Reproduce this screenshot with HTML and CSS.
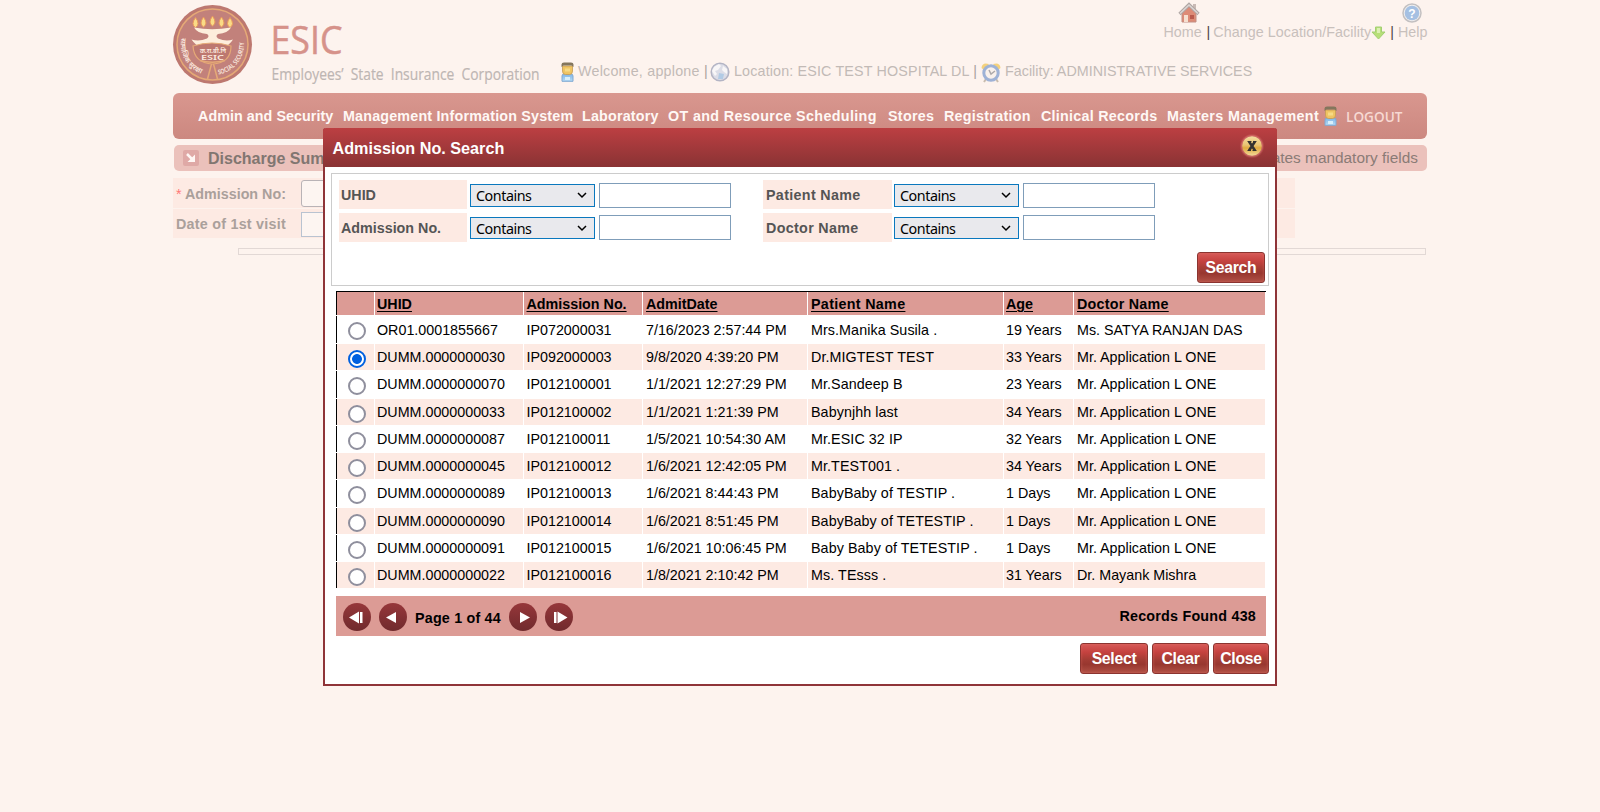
FILE: index.html
```html
<!DOCTYPE html>
<html lang="en">
<head>
<meta charset="utf-8">
<title>ESIC - Discharge Summary</title>
<link rel="stylesheet" href="styles.css">
</head>
<body>
<svg class="defs" width="0" height="0">
  <defs>
    <linearGradient id="disc" x1="0" y1="0" x2="0" y2="1"><stop offset="0" stop-color="#96373a"/><stop offset="1" stop-color="#702a2d"/></linearGradient>
    <linearGradient id="gold" x1="0" y1="0" x2="0" y2="1"><stop offset="0" stop-color="#f2dda0"/><stop offset=".45" stop-color="#e9c473"/><stop offset=".6" stop-color="#dfa93f"/><stop offset="1" stop-color="#f3d999"/></linearGradient>
    <linearGradient id="shirt" x1="0" y1="0" x2="0" y2="1"><stop offset="0" stop-color="#7fb4e6"/><stop offset="1" stop-color="#b5dcf6"/></linearGradient>
    <symbol id="user" viewBox="0 0 13 20">
      <path d="M1 14Q1 12 3 12H10Q12 12 12 14V19.300H1Z" fill="url(#shirt)" stroke="#80a9d2"/>
      <path d="M4 15h5v3H4z" fill="#d8effb"/>
      <path d="M1.500 4h10v5q0 3.500-3 3.500H4.500q-3 0-3-3.500z" fill="#efc463" stroke="#c69a52" stroke-width=".8"/>
      <path d="M4 6.500h5v3H4z" fill="#f7da85"/>
      <path d="M.500 5V2.500Q.500 .500 3 .500H10Q12.500 .500 12.500 2.500V5L10.500 3.500H2.500Z" fill="#84765d"/>
    </symbol>
  </defs>
</svg>

<div class="page">
  <header class="header">
    <svg class="logo" width="380" height="93" viewBox="0 0 380 93">
      <circle cx="39.500" cy="44.500" r="39.500" fill="#bd7870"/>
      <circle cx="39.500" cy="44.500" r="35.500" fill="#c2817b" stroke="#e5a977" stroke-width="1.500"/>
      <g fill="#fadb86" stroke="#e99a5c" stroke-width="1">
        <path d="M22.500 17.500q-5 7 0 10q5-3 0-10zM30.500 17q-5 7 0 10q5-3 0-10zM39.500 16q-5 7 0 10q5-3 0-10zM48.500 17q-5 7 0 10q5-3 0-10zM57 17.500q-5 7 0 10q5-3 0-10z"/>
      </g>
      <path d="M21 27.500Q39 31 58 27.500Q55 33 45 34Q42 36 45 38.500Q53 42 60 39.500Q56 46 50 47Q39 42 28 47Q23 46 18.500 39.500Q26 42 34 38.500Q37 36 34 34Q24 33 21 27.500Z" fill="#fdeedc"/>
      <path d="M20 46Q39 40 58 46Q58 63 39.500 64Q21 63 20 46Z" fill="#bd7870" stroke="#e5a977" stroke-width="1.200"/>
      <path d="M27 60.500Q39 64 52 60.500M38.500 64L34.500 79M40.500 64L44.500 79" fill="none" stroke="#e5a977" stroke-width="1.500"/>
      <text class="seal" x="27" y="52.500" font-size="6.500" textLength="26" lengthAdjust="spacingAndGlyphs">क.रा.बी.नि</text>
      <text class="seal" x="28" y="59.500" font-size="7" textLength="23" lengthAdjust="spacingAndGlyphs">ESIC</text>
      <path id="arcL" d="M8.500 38A31 31 0 0 0 34 75" fill="none"/>
      <path id="arcR" d="M45.500 74.500A30.500 30.500 0 0 0 70.500 39" fill="none"/>
      <text class="seal" font-size="7"><textPath href="#arcL" textLength="44">सामाजिक सुरक्षा</textPath></text>
      <text class="seal" font-size="6.500"><textPath href="#arcR" textLength="45" lengthAdjust="spacingAndGlyphs">SOCIAL SECURITY</textPath></text>
      <text class="brand" x="97.500" y="53.500" textLength="72" lengthAdjust="spacingAndGlyphs">ESIC</text>
      <text class="tagline" x="98.500" y="80" textLength="268" lengthAdjust="spacingAndGlyphs">Employees’ State Insurance Corporation</text>
    </svg>
    <div class="welcome">
      <svg width="13" height="20"><use href="#user"/></svg>
      <span class="w1">Welcome, applone <i>|</i></span>
      <svg class="globe" width="20" height="20" viewBox="0 0 20 20"><circle cx="10" cy="10" r="8.800" fill="#dcdde7" stroke="#b3b4c4" stroke-width="1.500"/><path d="M4 5L9 2L11 4L8 8L5 9L7 12L5 14L2 9ZM13 4L17 7L17 12L14 10L12 8Z" fill="#f8f6f7"/><path d="M9 11L14 12L13 17L8 17Z" fill="#b2cbe5"/></svg>
      <span class="w2">Location: ESIC TEST HOSPITAL DL <i>|</i></span>
      <svg width="20" height="21" viewBox="0 0 20 21"><path d="M.500 6Q1 0 8 2L3 8ZM19.500 6Q19 0 12 2L17 8Z" fill="#f4d17d"/><path d="M5 17L3 20M15 17L17 20" stroke="#c9bcae" stroke-width="2"/><circle cx="10" cy="11" r="7.200" fill="#f9f1ec" stroke="#9eb2d6" stroke-width="3"/><path d="M8 8L10 12L14 9" fill="none" stroke="#ada9aa" stroke-width="1.500"/></svg>
      <span class="w3">Facility: ADMINISTRATIVE SERVICES</span>
    </div>
    <div class="links">
      <span class="link home">
        <svg width="22" height="21" viewBox="0 0 22 21"><path d="M4 11L11 5L18 11V20H4Z" fill="#dd8b77" stroke="#c28f85"/><path d="M15 2h3v6h-3z" fill="#c9bab5"/><path d="M1.500 12L11 2.500L20.500 12" fill="none" stroke="#afa6a4" stroke-width="3.200"/><path d="M2 11.500L11 3L20 11.500" fill="none" stroke="#ddd6d4" stroke-width="1.500"/><path d="M6 13h4v7H6z" fill="#f6dfd0"/><path d="M12 13h4v4h-4z" fill="#ba5b4e"/></svg>
        <span>Home</span></span>
      <b>|</b>
      <span class="link change">Change Location/Facility</span>
      <svg class="down" width="15" height="14" viewBox="0 0 15 14"><path d="M4.500 1H10.500V6H14L7.500 13L1 6H4.500Z" fill="#b7df79" stroke="#a2cf73"/><path d="M6 2H9V7H6Z" fill="#dcf0b4"/></svg>
      <b>|</b>
      <span class="link help">
        <svg width="20" height="20" viewBox="0 0 20 20"><circle cx="10" cy="10" r="9" fill="#f1efef" stroke="#c3c0c1" stroke-width="1.500"/><circle cx="10" cy="10" r="7.300" fill="#a5c0e2"/><text class="qmark" x="10" y="14.500" text-anchor="middle">?</text></svg>
        <span>Help</span></span>
    </div>
  </header>

  <nav class="nav">
    <a class="n1">Admin and Security</a><a class="n2">Management Information System</a><a class="n3">Laboratory</a><a class="n4">OT and Resource Scheduling</a><a class="n5">Stores</a><a class="n6">Registration</a><a class="n7">Clinical Records</a><a class="n8">Masters Management</a>
    <svg width="13" height="20"><use href="#user"/></svg>
    <a class="logout">LOGOUT</a>
  </nav>

  <div class="titlebar">
    <svg width="16" height="16" viewBox="0 0 16 16"><rect width="16" height="16" rx="2" fill="#dfa9a6"/><path d="M4 4L9 9" stroke="#fff6f3" stroke-width="2.500"/><path d="M12 4.500V12H4.500Z" fill="#fff6f3"/></svg>
    <h1>Discharge Summary</h1>
    <span class="note">* indicates mandatory fields</span>
  </div>

  <div class="form">
    <div class="row"><label><em>*</em> Admission No:</label><span class="field plain"></span></div>
    <div class="row"><label class="visit">Date of 1st visit</label><span class="field"></span></div>
  </div>
  <div class="strip"></div>
</div>

<section class="modal">
  <div class="modal-head">
    <h2>Admission No. Search</h2>
    <svg width="26" height="26" viewBox="0 0 26 26"><circle cx="13" cy="13" r="12" fill="#d56762" opacity=".3"/><circle cx="13" cy="13" r="11" fill="#e08278" opacity=".5"/><circle cx="13" cy="13" r="9.800" fill="url(#gold)"/><path d="M10 8.500L16 17.500M16 8.500L10 17.500" stroke="#33312f" stroke-width="2.600"/><path d="M8.500 8.500h4M14 8.500h3.500M8.500 17.500h3.500M13.500 17.500h4" stroke="#33312f" stroke-width="1.200"/></svg>
  </div>
  <div class="criteria">
    <div class="fields">
      <label>UHID</label><span class="sel">Contains<svg width="10" height="7" viewBox="0 0 10 7"><path d="M1 1L5 5L9 1"/></svg></span><span class="inp"></span>
      <label class="c2">Patient Name</label><span class="sel right">Contains<svg width="10" height="7" viewBox="0 0 10 7"><path d="M1 1L5 5L9 1"/></svg></span><span class="inp"></span>
      <label>Admission No.</label><span class="sel low">Contains<svg width="10" height="7" viewBox="0 0 10 7"><path d="M1 1L5 5L9 1"/></svg></span><span class="inp low"></span>
      <label class="c2">Doctor Name</label><span class="sel low right">Contains<svg width="10" height="7" viewBox="0 0 10 7"><path d="M1 1L5 5L9 1"/></svg></span><span class="inp low"></span>
    </div>
    <button class="btn search">Search</button>
  </div>

  <div class="grid">
    <div class="tr th"><span></span><span>UHID</span><span>Admission No.</span><span>AdmitDate</span><span>Patient Name</span><span>Age</span><span>Doctor Name</span></div>
    <div class="tr first"><span><i class="radio"></i></span><span>OR01.0001855667</span><span>IP072000031</span><span>7/16/2023 2:57:44 PM</span><span>Mrs.Manika Susila .</span><span>19 Years</span><span>Ms. SATYA RANJAN DAS</span></div>
    <div class="tr"><span><i class="radio on"></i></span><span>DUMM.0000000030</span><span>IP092000003</span><span>9/8/2020 4:39:20 PM</span><span>Dr.MIGTEST TEST</span><span>33 Years</span><span>Mr. Application L ONE</span></div>
    <div class="tr"><span><i class="radio"></i></span><span>DUMM.0000000070</span><span>IP012100001</span><span>1/1/2021 12:27:29 PM</span><span>Mr.Sandeep B</span><span>23 Years</span><span>Mr. Application L ONE</span></div>
    <div class="tr"><span><i class="radio"></i></span><span>DUMM.0000000033</span><span>IP012100002</span><span>1/1/2021 1:21:39 PM</span><span>Babynjhh last</span><span>34 Years</span><span>Mr. Application L ONE</span></div>
    <div class="tr"><span><i class="radio"></i></span><span>DUMM.0000000087</span><span>IP012100011</span><span>1/5/2021 10:54:30 AM</span><span>Mr.ESIC 32 IP</span><span>32 Years</span><span>Mr. Application L ONE</span></div>
    <div class="tr"><span><i class="radio"></i></span><span>DUMM.0000000045</span><span>IP012100012</span><span>1/6/2021 12:42:05 PM</span><span>Mr.TEST001 .</span><span>34 Years</span><span>Mr. Application L ONE</span></div>
    <div class="tr"><span><i class="radio"></i></span><span>DUMM.0000000089</span><span>IP012100013</span><span>1/6/2021 8:44:43 PM</span><span>BabyBaby of TESTIP .</span><span>1 Days</span><span>Mr. Application L ONE</span></div>
    <div class="tr"><span><i class="radio"></i></span><span>DUMM.0000000090</span><span>IP012100014</span><span>1/6/2021 8:51:45 PM</span><span>BabyBaby of TETESTIP .</span><span>1 Days</span><span>Mr. Application L ONE</span></div>
    <div class="tr"><span><i class="radio"></i></span><span>DUMM.0000000091</span><span>IP012100015</span><span>1/6/2021 10:06:45 PM</span><span>Baby Baby of TETESTIP .</span><span>1 Days</span><span>Mr. Application L ONE</span></div>
    <div class="tr"><span><i class="radio"></i></span><span>DUMM.0000000022</span><span>IP012100016</span><span>1/8/2021 2:10:42 PM</span><span>Ms. TEsss .</span><span>31 Years</span><span>Dr. Mayank Mishra</span></div>
  </div>

  <div class="pager">
    <svg width="28" height="28" viewBox="0 0 28 28"><circle cx="14" cy="14" r="14" fill="url(#disc)"/><path d="M6 14.500L16 8.500V20.500ZM17 9h2.500v11H17z" fill="#fff"/></svg>
    <svg width="28" height="28" viewBox="0 0 28 28"><circle cx="14" cy="14" r="14" fill="url(#disc)"/><path d="M7 14.500L17 9V20Z" fill="#fff"/></svg>
    <span class="pages">Page 1 of 44</span>
    <svg width="28" height="28" viewBox="0 0 28 28"><circle cx="14" cy="14" r="14" fill="url(#disc)"/><path d="M11 9L21 14.500L11 20Z" fill="#fff"/></svg>
    <svg width="28" height="28" viewBox="0 0 28 28"><circle cx="14" cy="14" r="14" fill="url(#disc)"/><path d="M9 9h2.500v11H9zM12.500 8.500L22.500 14.500L12.500 20.500Z" fill="#fff"/></svg>
    <span class="found">Records Found 438</span>
  </div>

  <div class="actions">
    <button class="btn select">Select</button>
    <button class="btn clear">Clear</button>
    <button class="btn close">Close</button>
  </div>
</section>
</body>
</html>
```
FILE: styles.css
```css
* { box-sizing: border-box; }
html { height: 100%; overflow: hidden; }
body {
  margin: 0;
  height: 812px;
  background: #fdf3ee;
  font-family: "Liberation Sans", Arial, sans-serif;
  font-size: 14.3px;
  color: #000;
  position: relative;
}
h1, h2 { margin: 0; }
svg { display: block; flex: none; }
.defs { position: absolute; }

.page { width: 1254px; margin-left: 173px; }

/* header */
.header { height: 93px; display: flex; position: relative; }
.logo { overflow: visible; }
.seal { font-family: "Noto Sans", "Liberation Sans", sans-serif; font-weight: 600; fill: #fbe9df; }
.brand { font-family: "Open Sans", "Noto Sans", sans-serif; font-size: 38px; fill: #d6928a; stroke: #d6928a; stroke-width: .5px; }
.tagline { font-family: "Open Sans", "Noto Sans", sans-serif; font-size: 15.5px; fill: #bdb6b3; stroke: #bdb6b3; stroke-width: .2px; word-spacing: 4px; }
.welcome {
  display: flex;
  align-items: center;
  height: 22px;
  margin: 61px 0 0 8px;
  color: #c2bab6;
  white-space: nowrap;
}
.welcome span { line-height: 18px; padding-bottom: 2px; }
.welcome i { font-style: normal; color: #a9a09d; }
.w1 { width: 132px; margin-left: 4px; letter-spacing: .22px; }
.globe { margin-right: 4px; }
.w2 { width: 247px; letter-spacing: .16px; }
.w3 { margin-left: 4px; letter-spacing: .02px; }
.links {
  position: absolute;
  right: 0;
  top: 2px;
  height: 39px;
  display: flex;
  align-items: flex-end;
  line-height: 18px;
  color: #c8c0bc;
  white-space: nowrap;
}
.links b { font-weight: normal; color: #4b4644; }
.link { display: flex; flex-direction: column; }
.home { width: 43px; }
.home svg { margin-left: 14px; }
.change { margin-left: 3px; letter-spacing: .06px; }
.down { margin: 0 4px 1px 0; }
.help { margin-left: 4px; width: 29px; }
.help svg { margin-left: 4px; }
.qmark { font-size: 12px; font-weight: bold; fill: #fff; }

/* main menu */
.nav {
  height: 46px;
  padding-left: 25px;
  display: flex;
  align-items: center;
  border-radius: 6px;
  background: linear-gradient(#d9978f, #cc8880);
  color: #fff8f5;
  font-weight: bold;
  white-space: nowrap;
}
.n1 { width: 145px; letter-spacing: .06px; }
.n2 { width: 239px; letter-spacing: .19px; }
.n3 { width: 86px; letter-spacing: .2px; }
.n4 { width: 220px; letter-spacing: .36px; }
.n5 { width: 56px; letter-spacing: .3px; }
.n6 { width: 97px; letter-spacing: .28px; }
.n7 { width: 126px; letter-spacing: .27px; }
.n8 { width: 157px; letter-spacing: .37px; }
.logout { margin-left: 9px; font: 600 13.6px "Open Sans", sans-serif; color: #f7d9d3; }

/* screen title */
.titlebar {
  height: 26px;
  margin: 6px 0 7px 1px;
  padding: 0 9px 0 9px;
  display: flex;
  align-items: center;
  border-radius: 5px;
  background: #ebc1bb;
  color: #817671;
}
.titlebar h1 { font-size: 16px; margin-left: 9px; padding-top: 2px; }
.note { margin-left: auto; font-size: 15.4px; color: #8a7b76; }

.form { width: 1122px; display: flex; flex-direction: column; gap: 1px; }
.row { display: flex; height: 30px; background: #fdeae3; }
.row + .row { height: 29px; }
.row label {
  width: 125px;
  padding-left: 3px;
  line-height: 32px;
  font-weight: bold;
  color: #aaa09b;
  white-space: nowrap;
}
.row .visit { line-height: 30px; letter-spacing: .25px; }
.row em { color: #f77; font-weight: normal; font-style: normal; }
.row .field { width: 150px; height: 25px; margin: 3px 0 0 3px; border: 1px solid #b9c3d1; background: #fdf5f1; }
.row .plain { height: 27px; margin-top: 2px; border-color: #b9b3b6; border-radius: 3px; }
.strip { height: 7px; margin: 10px 1px 0 65px; border: 1px solid #e2d8d5; }

/* search dialog */
.modal {
  position: absolute;
  left: 323px;
  top: 128px;
  width: 954px;
  height: 558px;
  background: #fff;
  border: 2px solid #8f3438;
  border-top: 0;
  border-radius: 3px 3px 0 0;
}
.modal-head {
  height: 39px;
  margin: 0 -2px 6px;
  padding: 0 12px 3px 9.5px;
  display: flex;
  align-items: center;
  justify-content: space-between;
  border-radius: 3px 3px 0 0;
  background: linear-gradient(#bc3f42, #893334);
  color: #fff;
}
.modal-head h2 { font-size: 16.2px; padding-top: 4px; }
.criteria {
  width: 938px;
  height: 113px;
  margin: 0 0 5px 6px;
  padding: 6px 3px 0 7px;
  border: 1px solid #ccc;
}
.fields { display: grid; grid-template-columns: 128px 131px 165px 129px 129px 1fr; row-gap: 4px; grid-auto-rows: 29px; }
.fields label { line-height: 30px; height: 29px; padding-left: 2px; background: #fdeae3; font-weight: bold; color: #555; }
.fields .c2 { width: 129px; padding-left: 3px; letter-spacing: .33px; }
.sel {
  width: 125px;
  height: 23px;
  margin: 4px 0 0 3px;
  padding: 0 7px 0 5px;
  border: 1px solid #0a78be;
  background: #e9e9ed;
  display: flex;
  align-items: center;
  justify-content: space-between;
  font: 14.3px "Noto Sans", sans-serif;
  letter-spacing: -.45px;
}
.sel.low { height: 22px; }
.sel.right { margin-left: 2px; }
.sel path { fill: none; stroke: #000; stroke-width: 1.5; }
.inp { width: 132px; height: 25px; margin: 3px 0 0 1px; border: 1px solid #7f9db9; background: #fff; }
.sel.right + .inp { margin-left: 2px; }
.inp.low { margin-top: 2px; }
.btn {
  height: 31px;
  padding: 0;
  border: 1px solid #8b3430;
  border-radius: 3px;
  background: linear-gradient(#d65a58, #c5423f 28%, #a23c34 55%, #98372f 70%, #b05045);
  box-shadow: inset 0 0 3px rgba(225, 110, 100, .6);
  color: #fff;
  font: bold 15.8px "Liberation Sans", sans-serif;
  letter-spacing: -.3px;
}
.search { display: block; width: 68px; margin: 10px 0 0 auto; }

.grid { width: 930px; margin-left: 11px; border-top: 1px solid #000; }
.tr { display: grid; grid-template-columns: 38px 148px 118px 164px 195px 69px 191px; column-gap: 1px; height: 26.5px; margin-bottom: 1px; white-space: nowrap; }
.tr:nth-child(odd) { height: 26px; }
.tr.first { height: 27px; }
.tr span { padding: 2.4px 0 0 3px; line-height: 22px; }
.tr.first span { padding-top: 3px; }
.tr span:nth-child(1) { padding: 6px 0 0 11px; border-left: 1px solid #000; }
.tr span:nth-child(2) { padding-left: 2px; }
.tr span:nth-child(3) { padding-left: 2.5px; }
.tr span:nth-child(5) { letter-spacing: .08px; }
.tr span:nth-child(6) { padding-left: 2px; }
.tr:nth-child(odd) span { background: #fdeae3; }
.tr.th { height: 23px; margin-bottom: 1px; font-weight: bold; text-decoration: underline; text-decoration-thickness: 1px; text-underline-offset: 2px; }
.tr.th span { padding-top: 2px; background: #dc9b95; line-height: 20px; }
.tr.th span:nth-child(5) { letter-spacing: .32px; }
.tr.th span:nth-child(7) { letter-spacing: .25px; }
.radio { display: block; width: 18px; height: 18px; border: 2px solid #8f8f9d; border-radius: 50%; background: #fff; }
.radio.on { border-color: #0060df; background: radial-gradient(circle, #0060df 0 4.5px, #fff 5.3px); }

.pager {
  width: 930px;
  height: 40px;
  margin: 8px 0 7px 11px;
  padding: 0 10px 0 7px;
  display: flex;
  align-items: center;
  gap: 8px;
  background: #dc9b95;
  font-weight: bold;
}
.pager svg { margin-top: 2px; }
.pages { width: 86px; padding-top: 3px; white-space: nowrap; letter-spacing: .2px; }
.found { margin-left: auto; letter-spacing: .23px; }
.actions { display: flex; justify-content: flex-end; gap: 4px; padding-right: 6px; }
.select { width: 68px; }
.clear { width: 57px; }
.close { width: 56px; }
```
